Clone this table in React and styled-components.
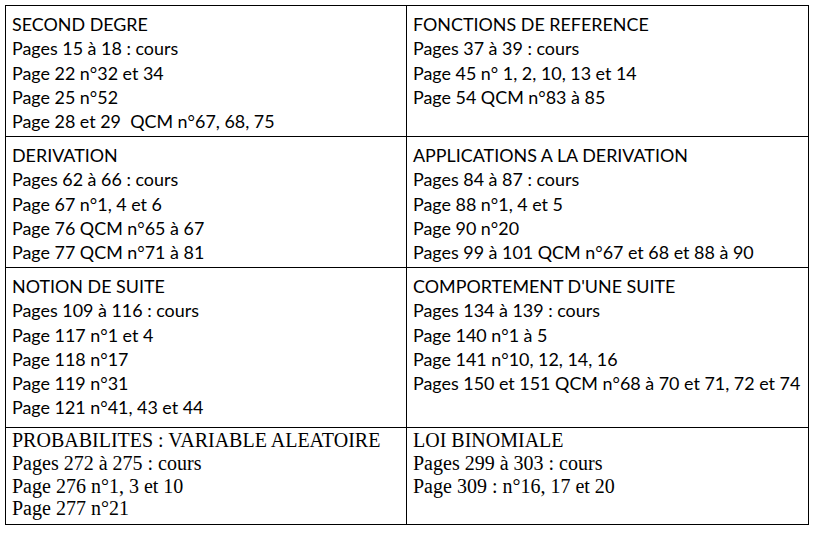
import styled, { createGlobalStyle } from 'styled-components';

const GlobalStyle = createGlobalStyle`
  html, body {
    margin: 0;
    padding: 0;
    background: #fff;
  }
`;

const Page = styled.div`
  padding: 5px 0 0 5px;
`;

const Table = styled.div`
  display: grid;
  grid-template-columns: 401px 402px;
  grid-template-rows: 131px 131px 160px 97px;
  width: 804px;
  border-top: 1.5px solid #000;
  border-left: 1.5px solid #000;
  box-sizing: border-box;
`;

const Cell = styled.div`
  border-right: 1.5px solid #000;
  border-bottom: 1.5px solid #000;
  padding: 6px 6px 0;
  font-family: Lato, "Open Sans", sans-serif;
  font-size: 17.9px;
  line-height: 24.3px;
  color: #000;
  white-space: pre;
  overflow: hidden;
`;

// last row is typed in a Times-like face in the original document
const SerifCell = styled(Cell)`
  padding-top: 1px;
  font-family: "Liberation Serif", "DejaVu Serif", "Times New Roman", Times, serif;
  font-size: 20px;
  line-height: 22.8px;
`;

const Line = styled.div``;

const cells = [
  ['SECOND DEGRE', 'Pages 15 à 18 : cours', 'Page 22 n°32 et 34', 'Page 25 n°52', 'Page 28 et 29  QCM n°67, 68, 75'],
  ['FONCTIONS DE REFERENCE', 'Pages 37 à 39 : cours', 'Page 45 n° 1, 2, 10, 13 et 14', 'Page 54 QCM n°83 à 85'],
  ['DERIVATION', 'Pages 62 à 66 : cours', 'Page 67 n°1, 4 et 6', 'Page 76 QCM n°65 à 67', 'Page 77 QCM n°71 à 81'],
  ['APPLICATIONS A LA DERIVATION', 'Pages 84 à 87 : cours', 'Page 88 n°1, 4 et 5', 'Page 90 n°20', 'Pages 99 à 101 QCM n°67 et 68 et 88 à 90'],
  ['NOTION DE SUITE', 'Pages 109 à 116 : cours', 'Page 117 n°1 et 4', 'Page 118 n°17', 'Page 119 n°31', 'Page 121 n°41, 43 et 44'],
  ['COMPORTEMENT D\'UNE SUITE', 'Pages 134 à 139 : cours', 'Page 140 n°1 à 5', 'Page 141 n°10, 12, 14, 16', 'Pages 150 et 151 QCM n°68 à 70 et 71, 72 et 74'],
];

const serifCells = [
  ['PROBABILITES : VARIABLE ALEATOIRE', 'Pages 272 à 275 : cours', 'Page 276 n°1, 3 et 10', 'Page 277 n°21'],
  ['LOI BINOMIALE', 'Pages 299 à 303 : cours', 'Page 309 : n°16, 17 et 20'],
];

export default function App() {
  return (
    <Page>
      <GlobalStyle />
      <Table>
        {cells.map((lines, i) => (
          <Cell key={i}>
            {lines.map((l, j) => (
              <Line key={j}>{l}</Line>
            ))}
          </Cell>
        ))}
        {serifCells.map((lines, i) => (
          <SerifCell key={i}>
            {lines.map((l, j) => (
              <Line key={j}>{l}</Line>
            ))}
          </SerifCell>
        ))}
      </Table>
    </Page>
  );
}
